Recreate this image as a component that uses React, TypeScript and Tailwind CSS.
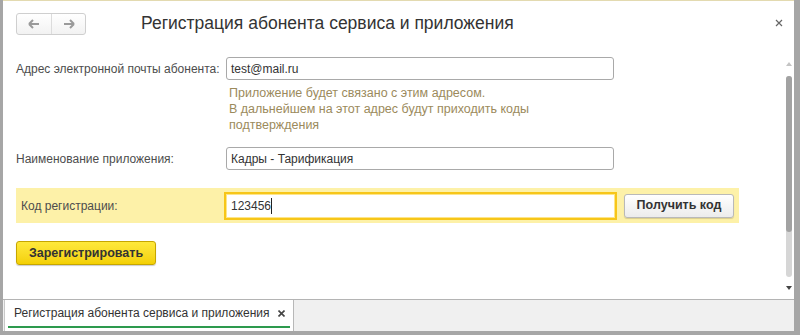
export default function App() {
  return (
    <div className="w-[800px] h-[335px] flex flex-col bg-[#a6a6a6] pl-[3px] pr-[6px] pb-[4px] font-['Liberation_Sans',Arial,sans-serif] text-[12px] text-[#4d4d4d] overflow-hidden">
      {/* form area */}
      <div className="h-[300px] flex bg-white border-t border-[#e3dab0] border-b border-b-[#b4b4b4]">
        <div className="flex-1 flex flex-col pl-[13px]">
          {/* header */}
          <div className="mt-[12px] h-[22px] flex items-center">
            <div className="w-[70px] h-[22px] flex rounded-[3px] border border-[#cfcfcf] bg-gradient-to-b from-white to-[#f2f2f2]">
              <div className="w-[35px] flex items-center justify-center border-r border-[#dcdcdc]">
                <svg width="12" height="10" viewBox="0 0 12 10">
                  <path d="M1 5h10M1 5l4-4M1 5l4 4" stroke="#9a9a9a" strokeWidth="2" fill="none" />
                </svg>
              </div>
              <div className="flex-1 flex items-center justify-center">
                <svg width="12" height="10" viewBox="0 0 12 10">
                  <path d="M11 5H1M11 5L7 1M11 5L7 9" stroke="#9a9a9a" strokeWidth="2" fill="none" />
                </svg>
              </div>
            </div>
            <div className="ml-[55px] text-[17.5px] text-[#333] leading-none whitespace-nowrap">Регистрация абонента сервиса и приложения</div>
            <div className="ml-auto mr-[1px] -mt-[3px]">
              <svg width="8" height="8" viewBox="0 0 8 8">
                <path d="M1 1l6 6M7 1L1 7" stroke="#666" strokeWidth="1.2" />
              </svg>
            </div>
          </div>

          {/* email */}
          <div className="mt-[22px] h-[23px] flex items-center">
            <div className="w-[210px] whitespace-nowrap">Адрес электронной почты абонента:</div>
            <div className="w-[388px] h-[23px] flex items-center pl-[4px] border border-[#a9a9a9] rounded-[3px] text-[#333]">test@mail.ru</div>
          </div>
          <div className="mt-[5px] ml-[213px] w-[320px] leading-[16px] text-[12.5px] text-[#9b8a5c]">
            Приложение будет связано с этим адресом.
            <br />
            В дальнейшем на этот адрес будут приходить коды подтверждения
          </div>

          {/* app name */}
          <div className="mt-[14px] h-[23px] flex items-center">
            <div className="w-[210px] whitespace-nowrap">Наименование приложения:</div>
            <div className="w-[388px] h-[23px] flex items-center pl-[4px] border border-[#a9a9a9] rounded-[3px] text-[#333]">Кадры - Тарификация</div>
          </div>

          {/* code band */}
          <div className="mt-[18px] w-[723px] h-[35px] flex items-center bg-[#fdf1a8]">
            <div className="w-[208px] pl-[5px] whitespace-nowrap">Код регистрации:</div>
            <div className="w-[393px] h-[28px] flex items-center pl-[5px] border-2 border-[#f7c619] bg-white text-[#333] shadow-[inset_0_0_0_1px_#fde58a]">
              123456<span className="w-px h-[16px] bg-[#222]" />
            </div>
            <button className="ml-[7px] w-[110px] h-[24px] rounded-[3px] border border-[#b9b9b9] bg-gradient-to-b from-white to-[#ececec] font-bold text-[12.5px] text-[#333] shadow-[0_1px_1px_rgba(0,0,0,0.15)]">
              Получить код
            </button>
          </div>

          {/* register */}
          <button className="mt-[18px] w-[140px] h-[24px] rounded-[3px] border border-[#c6a600] bg-gradient-to-b from-[#ffe93a] to-[#f4d000] font-bold text-[12.5px] text-[#333] shadow-[0_1px_1px_rgba(0,0,0,0.2)]">
            Зарегистрировать
          </button>
        </div>

        {/* scrollbar */}
        <div className="w-[10px] flex flex-col items-center">
          <div className="mt-[61px] w-0 h-0 border-l-[3px] border-r-[3px] border-b-[4px] border-l-transparent border-r-transparent border-b-[#c4c4c4]" />
          <div className="mt-[10px] w-[6px] h-[201px] rounded-[3px] bg-[#d6d6d6] flex flex-col">
            <div className="h-[156px] rounded-[3px] bg-[#a2a2a2]" />
          </div>
          <div className="mt-[9px] w-0 h-0 border-l-[3px] border-r-[3px] border-t-[4px] border-l-transparent border-r-transparent border-t-[#444]" />
        </div>
      </div>

      {/* tab bar */}
      <div className="flex-1 flex bg-[#f0f0f0]">
        <div className="ml-[1px] w-[290px] flex flex-col bg-white border-l border-[#c8c8c8] border-r border-r-[#b8b8b8]">
          <div className="flex-1 flex items-center pl-[9px] text-[#333] whitespace-nowrap">
            <span>Регистрация абонента сервиса и приложения</span>
            <svg className="ml-[8px] mt-[1px]" width="7" height="7" viewBox="0 0 7 7">
              <path d="M0.5 0.5l6 6M6.5 0.5l-6 6" stroke="#444" strokeWidth="1.6" />
            </svg>
          </div>
          <div className="mx-[3px] mb-[3px] h-[2px] bg-[#2d9a4e]" />
        </div>
      </div>
    </div>
  );
}
